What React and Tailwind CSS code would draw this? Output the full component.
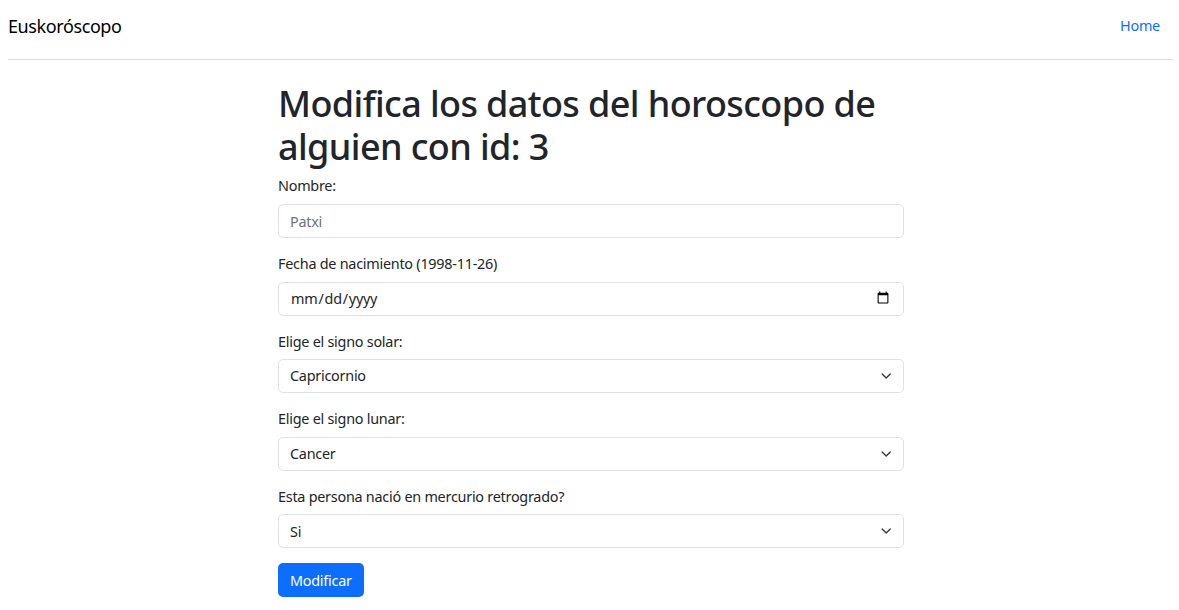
import React from "react";

const font = { fontFamily: "'Noto Sans', 'Open Sans', sans-serif" };

function Chevron() {
  return (
    <svg
      className="pointer-events-none absolute right-[11px] top-1/2 -translate-y-1/2"
      width="14.4"
      height="10.8"
      viewBox="0 0 16 16"
    >
      <path d="m2 5 6 6 6-6" fill="none" stroke="#343a40" strokeWidth="2" strokeLinecap="round" strokeLinejoin="round" />
    </svg>
  );
}

function Select({ value, options }) {
  return (
    <div className="relative">
      <select
        defaultValue={value}
        className="block h-[34px] w-full appearance-none rounded-[5px] border border-[#dee2e6] bg-white pl-[11px] pr-[36px] text-[14.4px] leading-[21.6px] tracking-[-0.25px] text-[#212529] outline-none"
        style={font}
      >
        {options.map((o) => (
          <option key={o}>{o}</option>
        ))}
      </select>
      <Chevron />
    </div>
  );
}

function Label({ children }) {
  return (
    <label className="mb-[7px] block text-[14.4px] leading-[21.6px] tracking-[-0.25px] text-[#212529]">{children}</label>
  );
}

export default function App() {
  const signos = [
    "Aries",
    "Tauro",
    "Geminis",
    "Cancer",
    "Leo",
    "Virgo",
    "Libra",
    "Escorpio",
    "Sagitario",
    "Capricornio",
    "Acuario",
    "Piscis",
  ];
  return (
    <div className="min-h-[610px] bg-white text-[#212529]" style={font}>
      <nav className="ml-[8px] flex h-[52px] w-[1165px] items-center justify-between">
        <span className="text-[18px] leading-[27px] tracking-[-0.4px] text-black">Euskoróscopo</span>
        <a href="#" className="pr-[13px] text-[14.4px] leading-[21.6px] tracking-[-0.25px] text-[#0d6efd]">
          Home
        </a>
      </nav>
      <hr className="ml-[8px] mt-[7px] w-[1165px] border-0 border-t border-[#dcdcdc]" />
      <div className="ml-[278px] w-[626px] pt-[22px]">
        <h1 className="mb-[7px] text-[36px] font-medium leading-[43.2px] tracking-[-0.6px] text-[#212529]">
          Modifica los datos del horoscopo de alguien con id: 3
        </h1>
        <form onSubmit={(e) => e.preventDefault()}>
          <div className="mb-[15px]">
            <Label>Nombre:</Label>
            <input
              type="text"
              placeholder="Patxi"
              className="block h-[34px] w-full rounded-[5px] border border-[#dee2e6] px-[11px] text-[14.4px] leading-[21.6px] tracking-[-0.25px] text-[#212529] outline-none placeholder:text-[#6c757d]"
              style={font}
            />
          </div>
          <div className="mb-[15px]">
            <Label>Fecha de nacimiento (1998-11-26)</Label>
            <input
              type="date"
              className="block h-[34px] w-full rounded-[5px] border border-[#dee2e6] px-[11px] text-[14.4px] leading-[21.6px] tracking-[-0.25px] text-[#212529] outline-none"
              style={font}
            />
          </div>
          <div className="mb-[15px]">
            <Label>Elige el signo solar:</Label>
            <Select value="Capricornio" options={signos} />
          </div>
          <div className="mb-[15px]">
            <Label>Elige el signo lunar:</Label>
            <Select value="Cancer" options={signos} />
          </div>
          <div className="mb-[15px]">
            <Label>Esta persona nació en mercurio retrogrado?</Label>
            <Select value="Si" options={["Si", "No"]} />
          </div>
          <button
            type="submit"
            className="h-[34px] rounded-[5px] bg-[#0d6efd] px-[12px] text-[14.4px] leading-[21.6px] tracking-[-0.25px] text-white"
            style={font}
          >
            Modificar
          </button>
        </form>
      </div>
    </div>
  );
}
